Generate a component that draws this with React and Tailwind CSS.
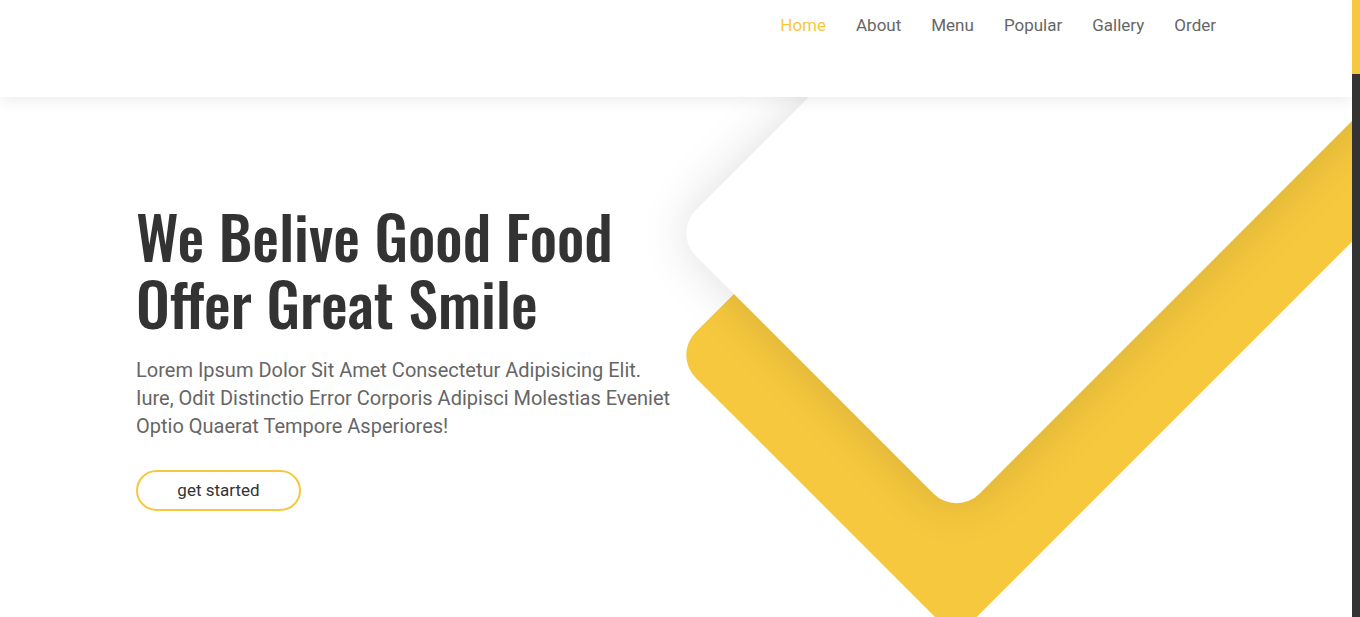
export default function App() {
  const links = ['Home', 'About', 'Menu', 'Popular', 'Gallery', 'Order']

  return (
    <div className="flex h-[617px] w-full overflow-hidden bg-white" style={{ fontFamily: 'Roboto, "Liberation Sans", sans-serif' }}>
      <div className="relative flex-1 overflow-hidden">
        {/* header */}
        <header className="relative z-20 flex h-[97px] justify-end bg-white px-[136px] pt-[14px] shadow-[0_4px_14px_rgba(0,0,0,0.07)]">
          <nav className="flex h-[24px] items-center gap-[30px] text-[17px] text-[#666]">
            {links.map((l, i) => (
              <a key={l} href="#" className={i === 0 ? 'text-[#f6c83e]' : ''}>{l}</a>
            ))}
          </nav>
        </header>

        {/* hero */}
        <section className="relative h-[520px]">
          <div className="absolute left-[673px] top-[258px] h-[400px] w-[1400px] origin-top-left -rotate-45 rounded-[32px] bg-[#f6c83e]" />
          <div className="absolute left-[673px] top-[136px] h-[401px] w-[1400px] origin-top-left -rotate-45 rounded-[32px] bg-white shadow-[0_0_50px_rgba(0,0,0,0.13)]" />

          <div className="relative z-10 w-[676px] pl-[136px] pt-[104px]">
            <h1 className="text-[60px] font-medium leading-[67px] text-[#333]" style={{ fontFamily: 'Oswald, "Liberation Sans Narrow", "DejaVu Sans Condensed", sans-serif' }}>
              We Belive Good Food Offer Great Smile
            </h1>
            <p className="mt-[21px] text-[20px] leading-[28px] text-[#666]">
              Lorem Ipsum Dolor Sit Amet Consectetur Adipisicing Elit. Iure, Odit Distinctio Error Corporis Adipisci Molestias Eveniet Optio Quaerat Tempore Asperiores!
            </p>
            <button className="mt-[30px] h-[41px] w-[165px] rounded-full border-2 border-[#f6c83e] text-[17px] text-[#333]">
              get started
            </button>
          </div>
        </section>
      </div>

      {/* scrollbar */}
      <div className="flex w-2 flex-col bg-[#333]">
        <div className="h-[74px] bg-[#f6c83e]" />
      </div>
    </div>
  )
}
